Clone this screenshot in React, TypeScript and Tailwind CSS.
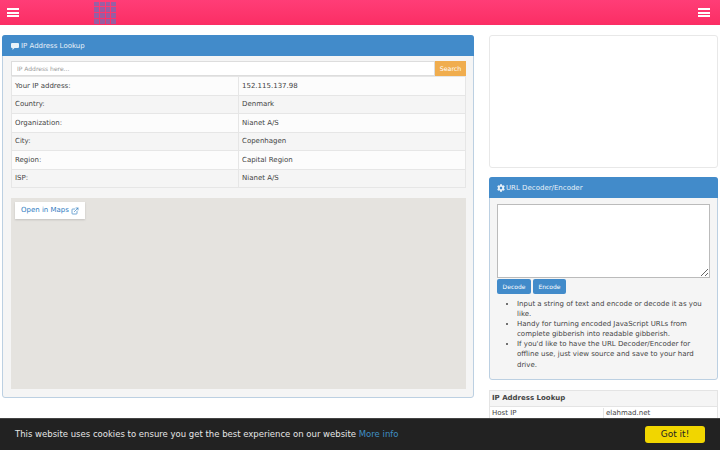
import { ExternalLink } from "lucide-react";
import { FaCog } from "react-icons/fa";

const rows = [
	{ label: "Your IP address:", value: "152.115.137.98" },
	{ label: "Country:", value: "Denmark" },
	{ label: "Organization:", value: "Nianet A/S" },
	{ label: "City:", value: "Copenhagen" },
	{ label: "Region:", value: "Capital Region" },
	{ label: "ISP:", value: "Nianet A/S" },
];

function Burger() {
	return (
		<div className="flex w-[12px] flex-col gap-[1.5px]">
			<span className="h-[2px] bg-white" />
			<span className="h-[2px] bg-white" />
			<span className="h-[2px] bg-white" />
		</div>
	);
}

function Logo() {
	return (
		<div className="grid h-[22px] w-[22px] grid-cols-4 gap-[1px] opacity-80">
			{Array.from({ length: 16 }).map((_, i) => (
				<span key={i} className="bg-[#8068b0]" />
			))}
		</div>
	);
}

function CommentIcon() {
	return (
		<svg viewBox="0 0 16 14" className="h-[7px] w-[8px]" fill="currentColor">
			<path d="M2 0h12a2 2 0 0 1 2 2v6a2 2 0 0 1-2 2H7l-4 4v-4H2a2 2 0 0 1-2-2V2a2 2 0 0 1 2-2z" />
		</svg>
	);
}

export default function App() {
	return (
		<div className="relative h-[450px] w-[720px] overflow-hidden bg-white font-['DejaVu_Sans',sans-serif] text-[7px] text-[#444]">
			<header className="flex h-[25px] items-center justify-between bg-gradient-to-b from-[#ff3d77] to-[#fb2d64] pr-[10px] pl-[7px]">
				<div className="flex items-center">
					<Burger />
					<div className="ml-[75px]">
						<Logo />
					</div>
				</div>
				<Burger />
			</header>

			<main className="flex items-start justify-between px-[2px] pt-[10px]">
				<section className="w-[472px] rounded-[3px] border border-[#bcd0e2] bg-[#f5f5f5]">
					<div className="-m-px flex h-[21px] items-center gap-[2px] rounded-t-[3px] bg-[#428bca] pt-[1px] pl-[9px] text-[#e8f1f8]">
						<CommentIcon />
						<span>IP Address Lookup</span>
					</div>
					<div className="pt-[6px] pr-[7px] pb-[8px] pl-[8px]">
						<div className="flex h-[15px]">
							<input
								placeholder="IP Address here..."
								className="min-w-0 flex-1 border border-[#ddd] bg-white px-[5px] text-[6px] placeholder:text-[#999]"
							/>
							<button className="w-[31px] bg-[#f0ad4e] text-[6.300px] text-white">Search</button>
						</div>
						<table className="w-full border-collapse bg-white">
							<tbody>
								{rows.map((row, i) => (
									<tr key={row.label} className={i % 2 === 0 ? "h-[18.500px] bg-[#fcfcfc]" : "h-[18.500px] bg-[#f5f5f5]"}>
										<td className="w-[227px] border border-[#e6e6e6] pl-[3px]">{row.label}</td>
										<td className="border border-[#e6e6e6] pl-[3px]">{row.value}</td>
									</tr>
								))}
							</tbody>
						</table>
						<div className="mt-[10px] h-[191px] bg-[#e5e3df] p-[4px]">
							<a className="inline-flex h-[17px] w-[70px] items-center gap-[2px] bg-white pl-[6px] text-[#2f7bbf] shadow-[0_1px_2px_rgba(0,0,0,0.15)]">
								Open in Maps
								<ExternalLink size={8} />
							</a>
						</div>
					</div>
				</section>

				<aside className="w-[229px]">
					<div className="h-[133px] rounded-[3px] border border-[#e8e8e8] bg-white" />

					<section className="mt-[9px] rounded-[3px] border border-[#bcd0e2] bg-[#f5f5f5]">
						<div className="-m-px flex h-[21px] items-center gap-[1px] rounded-t-[3px] bg-[#428bca] pl-[8px] text-[#e8f1f8]">
							<FaCog size={8} />
							<span className="pt-[1px]">URL Decoder/Encoder</span>
						</div>
						<div className="px-[7px] pt-[7px] pb-[9px]">
							<textarea className="block h-[74px] w-full border border-[#bbb] bg-white" />
							<div className="mt-[1px] flex gap-[2px]">
								<button className="h-[15px] w-[34px] rounded-[2px] bg-[#428bca] text-[6px] text-white">Decode</button>
								<button className="h-[15px] w-[33px] rounded-[2px] bg-[#428bca] text-[6px] text-white">Encode</button>
							</div>
							<ul className="mt-[5px] list-disc pl-[20px] leading-[10.100px]">
								<li>Input a string of text and encode or decode it as you like.</li>
								<li>Handy for turning encoded JavaScript URLs from complete gibberish into readable gibberish.</li>
								<li>If you'd like to have the URL Decoder/Encoder for offline use, just view source and save to your hard drive.</li>
							</ul>
						</div>
					</section>

					<div className="mt-[10px] border border-[#e4e4e4] bg-white">
						<div className="flex h-[15px] items-center bg-[#f5f5f5] pl-[2px] font-bold">IP Address Lookup</div>
						<div className="flex h-[15px] items-center border-t border-[#e4e4e4]">
							<span className="w-[114px] border-r border-[#e4e4e4] pl-[2px]">Host IP</span>
							<span className="pl-[2px]">elahmad.net</span>
						</div>
					</div>
				</aside>
			</main>

			<div className="absolute right-0 bottom-0 left-0 flex h-[32px] items-center justify-between border-t border-[#444] bg-[#222] pr-[15px] pl-[15px] text-[8.500px] text-[#e6e6e6]">
				<p>
					This website uses cookies to ensure you get the best experience on our website{" "}
					<a className="text-[#3f8fc4]">More info</a>
				</p>
				<button className="h-[17px] w-[60px] rounded-[3px] bg-[#f1d600] text-[9px] text-[#222]">Got it!</button>
			</div>
		</div>
	);
}
